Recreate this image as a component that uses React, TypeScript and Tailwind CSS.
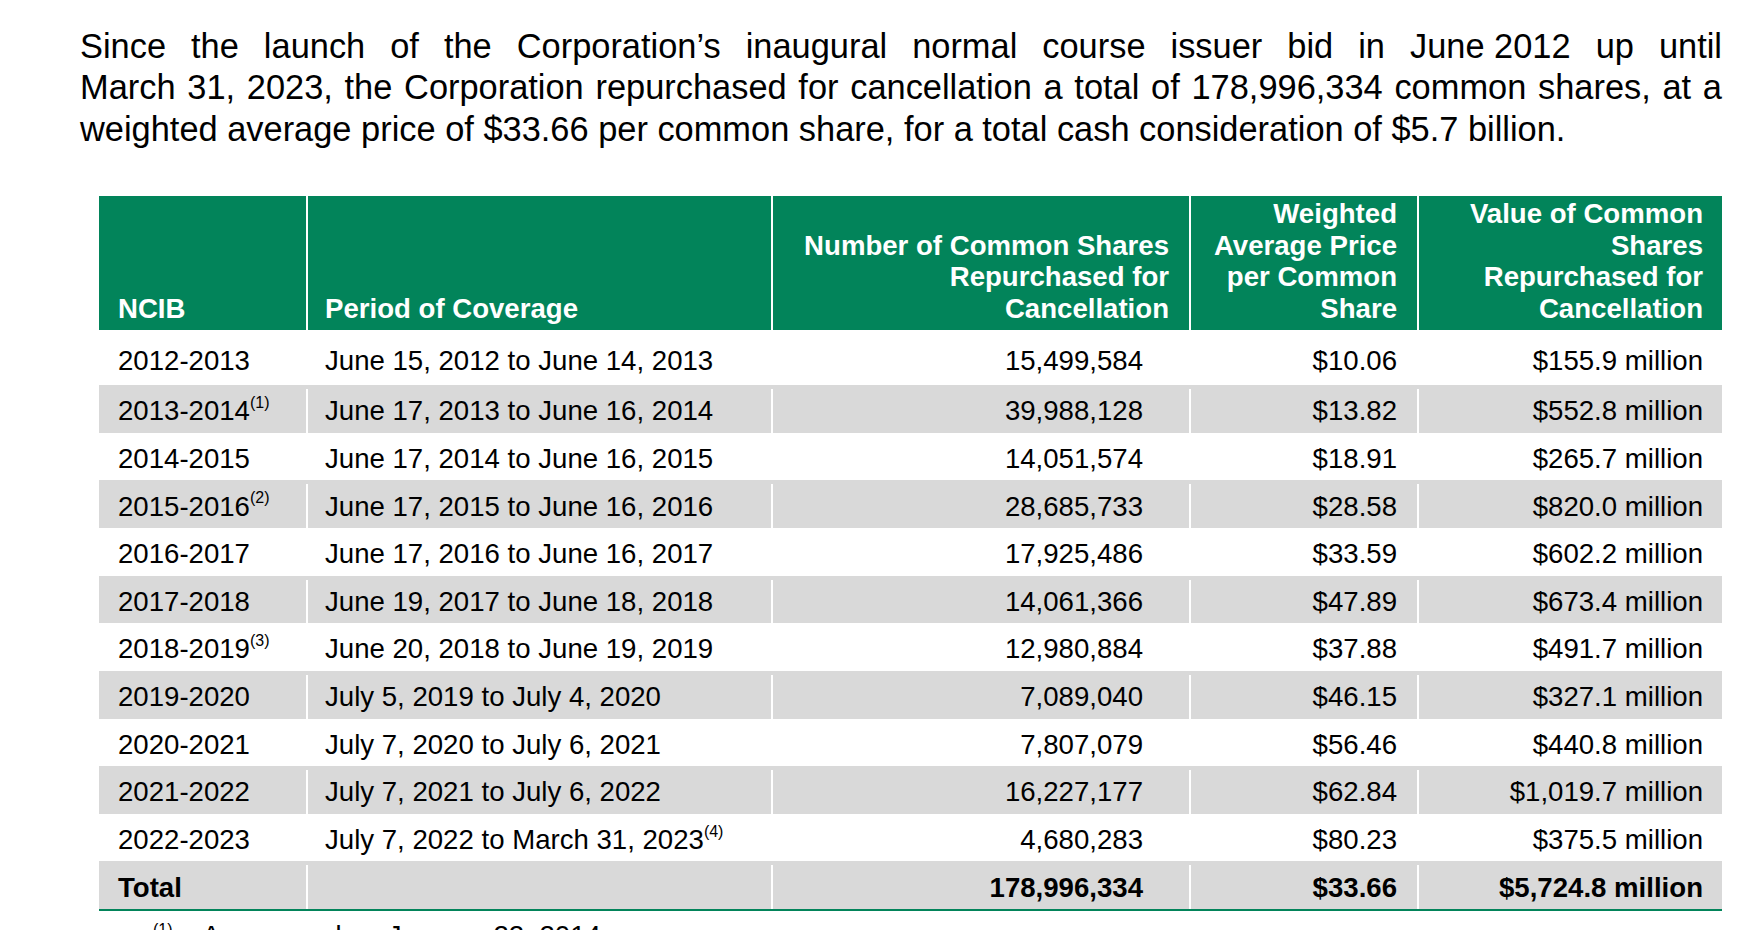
const rows = [
  { ncib: "2012-2013", period: "June 15, 2012 to June 14, 2013", shares: "15,499,584", price: "$10.06", value: "$155.9 million" },
  { ncib: "2013-2014", note: "(1)", period: "June 17, 2013 to June 16, 2014", shares: "39,988,128", price: "$13.82", value: "$552.8 million" },
  { ncib: "2014-2015", period: "June 17, 2014 to June 16, 2015", shares: "14,051,574", price: "$18.91", value: "$265.7 million" },
  { ncib: "2015-2016", note: "(2)", period: "June 17, 2015 to June 16, 2016", shares: "28,685,733", price: "$28.58", value: "$820.0 million" },
  { ncib: "2016-2017", period: "June 17, 2016 to June 16, 2017", shares: "17,925,486", price: "$33.59", value: "$602.2 million" },
  { ncib: "2017-2018", period: "June 19, 2017 to June 18, 2018", shares: "14,061,366", price: "$47.89", value: "$673.4 million" },
  { ncib: "2018-2019", note: "(3)", period: "June 20, 2018 to June 19, 2019", shares: "12,980,884", price: "$37.88", value: "$491.7 million" },
  { ncib: "2019-2020", period: "July 5, 2019 to July 4, 2020", shares: "7,089,040", price: "$46.15", value: "$327.1 million" },
  { ncib: "2020-2021", period: "July 7, 2020 to July 6, 2021", shares: "7,807,079", price: "$56.46", value: "$440.8 million" },
  { ncib: "2021-2022", period: "July 7, 2021 to July 6, 2022", shares: "16,227,177", price: "$62.84", value: "$1,019.7 million" },
  { ncib: "2022-2023", period: "July 7, 2022 to March 31, 2023", periodNote: "(4)", shares: "4,680,283", price: "$80.23", value: "$375.5 million" },
];

const cols = "grid grid-cols-[207px_465px_418px_228px_305px]";

const Sup = ({ children }: { children: string }) => (
  <sup className="text-[16px]">{children}</sup>
);

const App = () => {
  return (
    <div className="w-[1756px] h-[930px] overflow-hidden bg-white text-black font-['Liberation_Sans',Arial,sans-serif]">
      {/* intro paragraph, lines fixed as in the source */}
      <div className="pl-[80px] pt-[26px] w-[1722px] text-[34.4px] leading-[41.4px]">
        <div className="text-justify [text-align-last:justify]">
          Since the launch of the Corporation’s inaugural normal course issuer bid in{" "}
          <span className="inline-block whitespace-nowrap">June 2012</span> up until
        </div>
        <div className="text-justify [text-align-last:justify]">
          March 31, 2023, the Corporation repurchased for cancellation a total of 178,996,334 common shares, at a
        </div>
        <div>
          weighted average price of $33.66 per common share, for a total cash consideration of $5.7 billion.
        </div>
      </div>

      <div className="ml-[99px] mt-[46px] w-[1623px] text-[27.6px]">
        <div className={`${cols} h-[134px] bg-[#02845a] text-white font-bold leading-[31.5px]`}>
          <div className="flex items-end pl-[19px] pb-[6px]">NCIB</div>
          <div className="flex items-end border-l-2 border-white pl-[17px] pb-[6px]">Period of Coverage</div>
          <div className="flex items-end justify-end border-l-2 border-white pr-[20px] pb-[6px] text-right whitespace-nowrap">
            <span>
              Number of Common Shares
              <br />
              Repurchased for
              <br />
              Cancellation
            </span>
          </div>
          <div className="flex items-end justify-end border-l-2 border-white pr-[20px] pb-[6px] text-right whitespace-nowrap">
            <span>
              Weighted
              <br />
              Average Price
              <br />
              per Common
              <br />
              Share
            </span>
          </div>
          <div className="flex items-end justify-end border-l-2 border-white pr-[19px] pb-[6px] text-right whitespace-nowrap">
            <span>
              Value of Common
              <br />
              Shares
              <br />
              Repurchased for
              <br />
              Cancellation
            </span>
          </div>
        </div>

        {rows.map((r, i) => (
          <div
            key={r.ncib}
            className={`${cols} ${i === 0 ? "h-[55px] pt-[6px]" : "h-[47.64px] pt-[4px]"} ${i % 2 === 1 ? "bg-[#d9d9d9]" : "bg-white"}`}
          >
            <div className="flex items-center pl-[19px] whitespace-nowrap">
              {r.ncib}
              {r.note && <Sup>{r.note}</Sup>}
            </div>
            <div className="flex items-center border-l-2 border-white pl-[17px] whitespace-nowrap">
              {r.period}
              {r.periodNote && <Sup>{r.periodNote}</Sup>}
            </div>
            <div className="flex items-center justify-end border-l-2 border-white pr-[46px]">{r.shares}</div>
            <div className="flex items-center justify-end border-l-2 border-white pr-[20px]">{r.price}</div>
            <div className="flex items-center justify-end border-l-2 border-white pr-[19px]">{r.value}</div>
          </div>
        ))}

        <div className={`${cols} h-[47.64px] pt-[4px] bg-[#d9d9d9] font-bold`}>
          <div className="flex items-center pl-[19px]">Total</div>
          <div className="border-l-2 border-white" />
          <div className="flex items-center justify-end border-l-2 border-white pr-[46px]">178,996,334</div>
          <div className="flex items-center justify-end border-l-2 border-white pr-[20px]">$33.66</div>
          <div className="flex items-center justify-end border-l-2 border-white pr-[19px]">$5,724.8 million</div>
        </div>
        <div className="h-[2px] bg-[#02845a]" />
      </div>

      <div className="flex mt-[9px] pl-[153px] text-[27.6px] leading-[32px]">
        <span className="w-[49px] text-[16px] leading-[20px]">(1)</span>
        <span>Announced on January 22, 2014</span>
      </div>
    </div>
  );
};

export default App;
